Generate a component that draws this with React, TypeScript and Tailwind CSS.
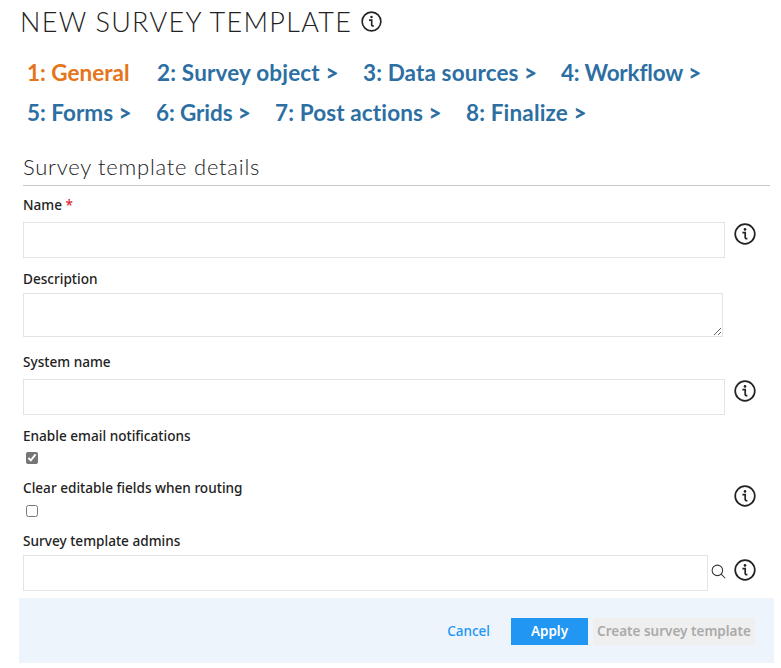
import React from 'react';

const steps = [
  [
    { label: '1: General', active: true, arrow: false, cls: 'w-[130px]' },
    { label: '2: Survey object', arrow: true, cls: 'w-[206px] tracking-[0.17px]' },
    { label: '3: Data sources', arrow: true, cls: 'w-[198px] tracking-[0.12px]' },
    { label: '4: Workflow', arrow: true, cls: 'tracking-[-0.2px]' },
  ],
  [
    { label: '5: Forms', arrow: true, cls: 'w-[129px]' },
    { label: '6: Grids', arrow: true, cls: 'w-[119px] tracking-[-0.1px]' },
    { label: '7: Post actions', arrow: true, cls: 'w-[191px] tracking-[0.12px]' },
    { label: '8: Finalize', arrow: true, cls: 'tracking-[0.15px]' },
  ],
];

function InfoIcon({ size = 22, className = '' }: { size?: number; className?: string }) {
  return (
    <svg width={size} height={size} viewBox="0 0 22 22" fill="none" stroke="#222" className={`shrink-0 ${className}`}>
      <circle cx="11" cy="11" r="9.8" strokeWidth="1.7" />
      <circle cx="11" cy="6.4" r="1.3" fill="#222" stroke="none" />
      <path d="M8.4 9.6h2.8v5c0 1 .7 1.2 2.2 1" strokeWidth="1.7" />
    </svg>
  );
}

function Label({ children }: { children: React.ReactNode }) {
  return <label className="block text-[13.6px] leading-[20px] font-medium text-[#222]">{children}</label>;
}

function TextBox({ className = 'w-[702px]' }: { className?: string }) {
  return <input type="text" className={`h-[36px] border border-[#e3e3e3] bg-white outline-none ${className}`} />;
}

export default function App() {
  return (
    <div className="w-[781px] h-[668px] bg-white overflow-hidden font-['Noto_Sans',sans-serif]">
      <div className="pl-[20px] pt-[4px] flex items-center gap-[9px] h-[39px]">
        <h1 className="text-[27px] leading-[36px] font-light text-[#222] font-['Lato',sans-serif] tracking-[1.3px]">NEW SURVEY TEMPLATE</h1>
        <InfoIcon size={21} />
      </div>

      <div className="pl-[27px] pt-[14px] font-['Lato',sans-serif]">
        {steps.map((row, i) => (
          <div key={i} className="flex h-[40px] items-center">
            {row.map((s) => (
              <a key={s.label} className={`text-[22.5px] leading-[30px] font-bold ${s.cls} ${s.active ? 'text-[#e5741a]' : 'text-[#2d6fa3]'}`}>
                {s.label}
                {s.arrow && <span className="font-black"> &gt;</span>}
              </a>
            ))}
          </div>
        ))}
      </div>

      <div className="ml-[23px] mr-[11px] mt-[18px] h-[35px] border-b border-[#c9c9c9]">
        <h2 className="text-[22px] leading-[32px] font-light text-[#222] font-['Lato',sans-serif] tracking-[0.75px]">Survey template details</h2>
      </div>

      <div className="pl-[23px]">
        <div className="pt-[9px]">
          <Label>Name <span className="text-[#d9262c]">*</span></Label>
          <div className="mt-[7px] flex items-start gap-[9px]">
            <TextBox />
            <InfoIcon className="mt-[1px]" />
          </div>
        </div>

        <div className="mt-[11px]">
          <Label>Description</Label>
          <textarea className="block mt-[4px] w-[700px] h-[44px] border border-[#e3e3e3] bg-white outline-none" />
        </div>

        <div className="mt-[15px]">
          <Label>System name</Label>
          <div className="mt-[7px] flex items-start gap-[9px]">
            <TextBox />
            <InfoIcon className="mt-[1px]" />
          </div>
        </div>

        <div className="mt-[11px]">
          <Label>Enable email notifications</Label>
          <input type="checkbox" defaultChecked className="block ml-[3px] mt-[6px] w-[12px] h-[12px] accent-[#757575]" />
        </div>

        <div className="mt-[14px] relative">
          <Label>Clear editable fields when routing</Label>
          <input type="checkbox" className="block ml-[3px] mt-[7px] w-[12px] h-[12px]" />
          <div className="absolute left-[711px] top-[7px]">
            <InfoIcon />
          </div>
        </div>

        <div className="mt-[14px]">
          <Label>Survey template admins</Label>
          <div className="mt-[4px] flex items-start">
            <TextBox className="w-[685px]" />
            <svg width="15" height="15" viewBox="0 0 16 16" fill="none" stroke="#333" className="ml-[3px] mr-[8px] mt-[9px]">
              <circle cx="6.8" cy="6.8" r="5.6" strokeWidth="1.1" />
              <path d="M10.8 10.8l4.4 4.4" strokeWidth="1.1" />
            </svg>
            <InfoIcon className="mt-[4px]" />
          </div>
        </div>
      </div>

      <div className="ml-[19px] mt-[7px] w-[755px] h-[65px] bg-[#edf4fc] flex items-center justify-end pt-[2px] pr-[19px] gap-[5px] text-[13.5px] font-medium">
        <a className="text-[#2196f3] mr-[16px]">Cancel</a>
        <button className="w-[77px] h-[27px] bg-[#2196f3] text-white font-semibold">Apply</button>
        <button disabled className="w-[162px] h-[27px] bg-[#efefef] text-[#aaa] font-semibold">Create survey template</button>
      </div>
    </div>
  );
}
